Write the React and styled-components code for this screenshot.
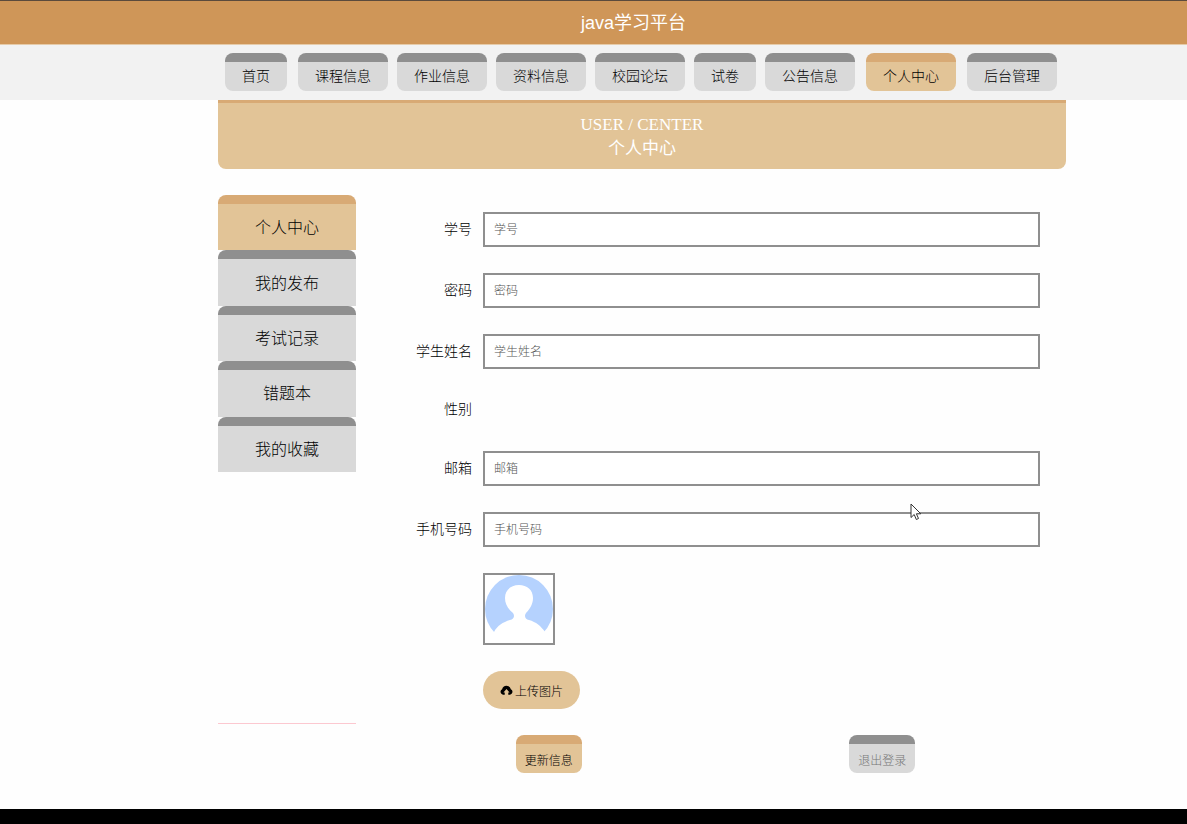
import React, { useState } from "react";
import styled, { createGlobalStyle } from "styled-components";

const FIRST = [{ name: '首页' }]
const MIDDLE = [
    { name: '课程信息' },
    { name: '作业信息' },
    { name: '资料信息' },
    { name: '校园论坛' },
    { name: '试卷' },
    { name: '公告信息' },
]
const LAST = [{ name: '个人中心', active: true }, { name: '后台管理' }]

const SIDE = ['个人中心', '我的发布', '考试记录', '错题本', '我的收藏']

const App = () => {

    const [current, setCurrent] = useState(0);
    const [form, setForm] = useState({});

    const changeHandler = e => setForm({ ...form, [e.target.name]: e.target.value });

    const renderField = (name, label, type = 'text') => (
        <Row>
            <Label htmlFor={name}>{label}</Label>
            <Input id={name} name={name} type={type} placeholder={label} value={form[name] || ''} onChange={changeHandler} />
        </Row>
    )

    const renderLinks = list => list.map(el => (
        <NavLink href="#" key={el.name} $active={el.active}>{el.name}</NavLink>
    ))

    return (
        <Page>
            <GlobalStyle />
            <Header>java学习平台</Header>
            <NavBar>
                <Nav>
                    {renderLinks(FIRST)}
                    <NavGroup>{renderLinks(MIDDLE)}</NavGroup>
                    {renderLinks(LAST)}
                </Nav>
            </NavBar>
            <Main>
                <Banner>
                    <span>USER / CENTER</span>
                    <span>个人中心</span>
                </Banner>
                <Columns>
                    <Aside>
                        <SideList>
                            {SIDE.map((el, i) => (
                                <SideItem href="#" key={el} $active={i === current} onClick={() => setCurrent(i)}>{el}</SideItem>
                            ))}
                        </SideList>
                    </Aside>
                    <Form onSubmit={e => e.preventDefault()}>
                        {renderField('number', '学号')}
                        {renderField('password', '密码', 'password')}
                        {renderField('realname', '学生姓名')}
                        <Row>
                            <Label as="span">性别</Label>
                        </Row>
                        {renderField('email', '邮箱')}
                        <PhoneRow>
                            {renderField('phone', '手机号码')}
                            <Cursor viewBox="0 0 12 18" aria-hidden="true">
                                <path d="M1 1v13.5l3.2-3 2.1 5 2.2-1-2.1-4.7h4.4z" fill="#fff" stroke="#333" />
                            </Cursor>
                        </PhoneRow>
                        <Row>
                            <Label as="span" />
                            <Avatar viewBox="0 0 68 68" role="img" aria-label="头像">
                                <circle cx="34" cy="34" r="34" fill="#b5d2fe" />
                                <path d="M0 68V64L9 57C12 51 18 47 25 45C29 44 30 41 28 38C23 34 20 29 20 23C20 15 26 10 34 10C42 10 48 15 48 23C48 29 45 34 41 38C39 41 40 44 44 45C51 47 56 51 60 57L68 64V68Z" fill="#fff" />
                            </Avatar>
                        </Row>
                        <Row>
                            <Label as="span" />
                            <Upload type="button">
                                <CloudIcon viewBox="0 0 14 12" aria-hidden="true">
                                    <path d="M3.6 11H3.2A3 3 0 0 1 2.3 5.3 4.8 4.8 0 0 1 11.7 5.3 3 3 0 0 1 10.8 11H8.9V8.6H10.3L7 5 3.7 8.6H5.1V11Z" />
                                </CloudIcon>
                                上传图片
                            </Upload>
                        </Row>
                        <Actions>
                            <Action type="submit" $active>更新信息</Action>
                            <Action type="button">退出登录</Action>
                        </Actions>
                    </Form>
                </Columns>
            </Main>
            <Footer />
        </Page>
    );
};

export default App;

const GlobalStyle = createGlobalStyle`
    *{
        box-sizing:border-box;
    }
    body{
        margin:0;
        background:#fefefe;
        font-family:"Liberation Sans", "Noto Sans CJK SC", sans-serif;
        font-weight:300;
    }
    button,input{
        font-family:inherit;
        font-weight:inherit;
    }
`;

const Page = styled.div`
    min-height:100vh;
    display:flex;
    flex-direction:column;
`;

const Header = styled.header`
    padding:2px 0 0 80px;
    line-height:41px;
    border-top:1px solid #5b4a3c;
    border-bottom:1px solid #e6cba9;
    background:#cf9658;
    color:#fff;
    font-size:18px;
    font-weight:400;
    text-align:center;
`;

const NavBar = styled.div`
    padding:8px 0 9px 97px;
    background:#f2f2f2;
`;

const Nav = styled.nav`
    max-width:848px;
    margin:0 auto;
    padding-left:7px;
    display:flex;
    gap:11px;
`;

const NavGroup = styled.div`
    display:flex;
    gap:9px;
`;

const NavLink = styled.a`
    height:38px;
    padding:0 17px;
    line-height:29px;
    border-top:9px solid ${props => props.$active ? '#d8aa75' : '#8f8f8f'};
    border-radius:8px;
    background:${props => props.$active ? '#e2c497' : '#d9d9d9'};
    color:#000;
    font-size:14px;
    text-decoration:none;
    white-space:nowrap;
`;

const Main = styled.main`
    padding-left:97px;
    padding-bottom:36px;
`;

const Banner = styled.div`
    max-width:848px;
    margin:0 auto 26px;
    padding:10px 0 8px;
    display:flex;
    flex-direction:column;
    align-items:center;
    border-top:3px solid #d8aa75;
    border-radius:0 0 8px 8px;
    background:#e2c497;
    color:#fff;
    font-family:"Liberation Serif", "Noto Sans CJK SC", serif;
    font-size:17px;
    font-weight:400;
    line-height:24px;
`;

const Columns = styled.div`
    max-width:848px;
    margin:0 auto;
    display:flex;
    align-items:flex-start;
    gap:26px;
`;

const Aside = styled.aside`
    width:138px;
    min-height:529px;
    border-bottom:1px solid #fcc8d0;
`;

const SideList = styled.nav`
    height:277px;
    display:grid;
    grid-auto-rows:1fr;
`;

const SideItem = styled.a`
    padding-bottom:2px;
    display:flex;
    align-items:center;
    justify-content:center;
    border-top:9px solid ${props => props.$active ? '#d8aa75' : '#8f8f8f'};
    border-radius:8px 8px 0 0;
    background:${props => props.$active ? '#e2c497' : '#d9d9d9'};
    color:#000;
    font-size:16px;
    text-decoration:none;
`;

const Form = styled.form`
    flex:1;
    padding:17px 17px 0 0;
    display:flex;
    flex-direction:column;
    gap:26px;
`;

const Row = styled.div`
    min-height:30px;
    padding-right:9px;
    display:flex;
    align-items:center;
    gap:11px;
`;

const PhoneRow = styled.div`
    position:relative;
`;

const Label = styled.label`
    width:90px;
    flex:none;
    padding-bottom:2px;
    color:#000;
    font-size:14px;
    line-height:20px;
    text-align:right;
`;

const Input = styled.input`
    flex:1;
    min-width:0;
    height:35px;
    padding:0 9px;
    border:2px solid #8f8f8f;
    border-radius:0;
    background:#fff;
    color:#333;
    font-size:12px;
    outline:none;
    &::placeholder{
        color:#555;
    }
`;

const Cursor = styled.svg`
    position:absolute;
    top:-9px;
    right:127px;
    width:12px;
    height:18px;
`;

const Avatar = styled.svg`
    width:72px;
    height:72px;
    border:2px solid #8f8f8f;
    background:#fff;
`;

const Upload = styled.button`
    height:38px;
    padding:0 17px;
    display:flex;
    align-items:center;
    gap:2px;
    border:none;
    border-radius:19px;
    background:#e2c497;
    color:#000;
    font-size:12px;
    cursor:pointer;
`;

const CloudIcon = styled.svg`
    width:13px;
    height:12px;
`;

const Actions = styled.div`
    display:flex;
    justify-content:space-around;
`;

const Action = styled.button`
    height:38px;
    padding:2px 9px 0;
    border:none;
    border-top:9px solid ${props => props.$active ? '#d8aa75' : '#8f8f8f'};
    border-radius:8px;
    background:${props => props.$active ? '#e2c497' : '#d9d9d9'};
    color:${props => props.$active ? '#000' : '#777'};
    font-size:12px;
    cursor:pointer;
`;

const Footer = styled.footer`
    flex:1;
    min-height:15px;
    background:#000;
`;
